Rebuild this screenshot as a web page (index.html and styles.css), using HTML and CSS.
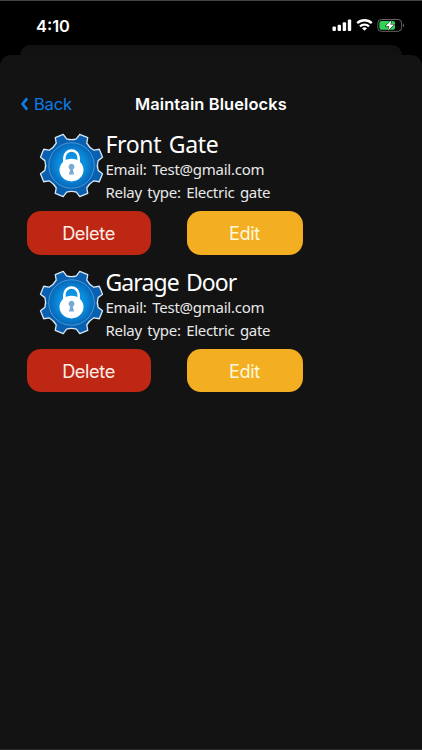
FILE: index.html
```
<!DOCTYPE html>
<html lang="en">
<head>
<meta charset="utf-8">
<title>Maintain Bluelocks</title>
<link rel="stylesheet" href="styles.css">
</head>
<body>
<svg class="defs" width="0" height="0" aria-hidden="true">
  <defs>
    <radialGradient id="disc"><stop offset="0" stop-color="#12a4f0"/><stop offset=".6" stop-color="#0b8bdb"/><stop offset="1" stop-color="#0667b8"/></radialGradient>
    <symbol id="gear" viewBox="-100 -100 200 200">
      <path fill="#0a60b0" stroke="#d8e8f5" stroke-width="4" stroke-linejoin="round" d="M15-82 25.4-95.5 50-85.5 47-69Q54-56 69-47L85.5-50 95.5-25.4 82-15Q77 0 82 15L95.5 25.4 85.5 50 69 47Q54 56 47 69L50 85.5 25.4 95.5 15 82Q0 77-15 82L-25.4 95.5-50 85.5-47 69Q-54 56-69 47L-85.5 50-95.5 25.4-82 15Q-77 0-82-15L-95.5-25.4-85.5-50-69-47Q-54-56-47-69L-50-85.5-25.4-95.5-15-82Q0-77 15-82Z"/>
      <circle r="70" fill="url(#disc)" stroke="#5ca8df" stroke-width="2.4"/>
      <path d="M-22-5V-24a22 22 0 0 1 44 0V-5" fill="none" stroke="#fff" stroke-width="8"/>
      <ellipse cy="14" rx="37" ry="35" fill="#fff"/>
      <path fill="#79a9d3" d="M-4 12a9 9 0 1 1 8 0L8 28H-8Z"/>
    </symbol>
  </defs>
</svg>
<div class="phone">
  <header class="status">
    <span class="time">4:10</span>
    <svg class="indicators" width="74" height="16" viewBox="0 0 74 16">
      <g fill="#fff">
        <rect x="0.5" y="9.5" width="3.4" height="4.5" rx="1"/>
        <rect x="5.6" y="7.8" width="3.4" height="6.2" rx="1"/>
        <rect x="10.7" y="5.2" width="3.4" height="8.8" rx="1"/>
        <rect x="15.8" y="2.5" width="3.4" height="11.5" rx="1"/>
      </g>
      <g fill="none" stroke="#fff" stroke-width="2.3">
        <path d="M25.2 6.2a10.5 10.5 0 0 1 14.6 0"/>
        <path d="M28 9.3a6.6 6.6 0 0 1 9 0"/>
      </g>
      <path fill="#fff" d="M30 11.2a4 4 0 0 1 5 0L32.5 13.8Z"/>
      <rect x="45.8" y="2.5" width="23.8" height="11.8" rx="3.5" fill="none" stroke="#666" stroke-width="1"/>
      <path fill="#777" d="M71 6.6q2 1.8 0 3.6z"/>
      <rect x="47.4" y="4.1" width="15.6" height="8.6" rx="2" fill="#31d158"/>
      <path fill="#fff" stroke="#000" stroke-width="1" paint-order="stroke" d="M59.5 3.2 53.4 9.2H57.2L56 13.8 62.2 7.6H58.4Z"/>
    </svg>
  </header>
  <div class="sheet-behind"></div>
  <main class="sheet">
    <nav class="navbar">
      <a class="back"><svg width="9" height="14" viewBox="0 0 9 14"><path d="M7.2 1.4 2.6 7l4.6 5.6" fill="none" stroke="#0c7de8" stroke-width="2.7"/></svg><span>Back</span></a>
      <h1>Maintain Bluelocks</h1>
    </nav>
    <section class="lock">
      <div class="info">
        <svg class="gear"><use href="#gear"/></svg>
        <div class="details">
          <h2>Front Gate</h2>
          <p class="email">Email: Test@gmail.com</p>
          <p class="relay">Relay type: Electric gate</p>
        </div>
      </div>
      <div class="actions"><button class="delete">Delete</button><button class="edit">Edit</button></div>
    </section>
    <section class="lock">
      <div class="info">
        <svg class="gear"><use href="#gear"/></svg>
        <div class="details">
          <h2 class="garage">Garage Door</h2>
          <p class="email">Email: Test@gmail.com</p>
          <p class="relay">Relay type: Electric gate</p>
        </div>
      </div>
      <div class="actions"><button class="delete">Delete</button><button class="edit">Edit</button></div>
    </section>
  </main>
</div>
</body>
</html>
```
FILE: styles.css
```
* { box-sizing: border-box; margin: 0; padding: 0; }
body { background: #000; color: #fff; font-family: Inter, "Liberation Sans", sans-serif; }
.defs { display: block; height: 0; }
.phone {
  width: 422px; height: 750px; overflow: hidden;
  display: flex; flex-direction: column;
  background: #000; border-top: 1px solid #444; border-bottom: 1px solid #2c2c2c;
}
.status {
  height: 44px; flex: none; display: flex; justify-content: space-between;
  padding: 15.5px 16px 0 36px;
}
.time { font-size: 16.4px; font-weight: 600; line-height: 18px; }
.indicators { margin-top: .5px; }
.sheet-behind { height: 10px; flex: none; margin: 0 20px; background: #111; border-radius: 10px 10px 0 0; }
.sheet { flex: 1; background: #131313; border-radius: 11px 11px 0 0; }
.navbar {
  height: 73px; padding: 37px 0 0 20px; display: flex; align-items: flex-start;
  line-height: 24px;
}
.back { width: 115px; display: flex; align-items: center; gap: 5px; font-size: 16.5px; letter-spacing: -.2px; color: #0c7de8; }
.navbar h1 { font-size: 16.4px; font-weight: 600; letter-spacing: .13px; line-height: 24px; white-space: nowrap; }
.lock { height: 137.5px; }
.info { height: 83px; padding-left: 39px; display: flex; }
.gear { width: 65px; height: 65px; margin: 4.6px 2px 0 -.5px; flex: none; }
.details { font-family: "Noto Sans", sans-serif; white-space: nowrap; }
.details h2 { font-size: 23px; font-weight: 400; line-height: 32px; letter-spacing: -.35px; word-spacing: 2px; }
.details .garage { letter-spacing: -.9px; }
.details p { font-size: 15px; font-weight: 400; line-height: 23px; color: #e8e8e8; word-spacing: 2px; }
.details .email { margin-top: -2px; letter-spacing: -.25px; }
.details .relay { letter-spacing: -.3px; }
.actions { display: flex; gap: 36px; padding-left: 26.5px; }
.actions button {
  height: 43.5px; border: 0; border-radius: 14px; color: #fff;
  font: 400 18.2px/44px Inter, sans-serif; letter-spacing: -.4px;
}
.actions .delete { width: 124px; background: #be2714; color: #ffece6; }
.actions .edit { width: 116px; background: #f3ae21; color: #fff8dc; }
```
